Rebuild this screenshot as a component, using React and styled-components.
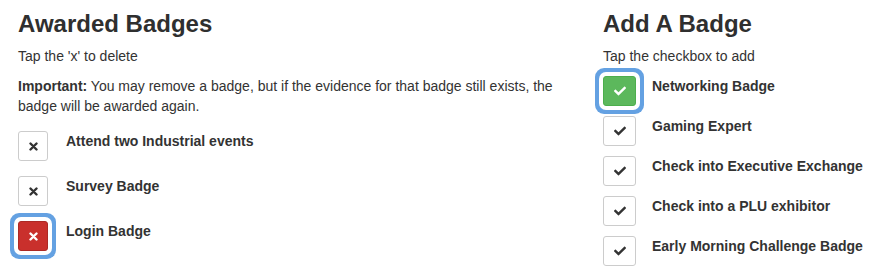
import React from 'react';
import styled, { createGlobalStyle, css } from 'styled-components';
import { FaCheck } from 'react-icons/fa';

const GlobalStyle = createGlobalStyle`
  body {
    margin: 0;
    background: #fff;
    color: #333;
    font-family: "Liberation Sans", Arial, sans-serif;
    font-size: 14px;
    line-height: 20px;
  }
`

const Page = styled.div`
  display: grid;
  grid-template-columns: 555px 1fr;
  column-gap: 30px;
  padding: 11px 0 0 18px;
`
const Column = styled.section`
  display: flex;
  flex-direction: column;
`
const Title = styled.h3`
  font-size: 24px;
  font-weight: bold;
  line-height: 26.4px;
  margin: 0 0 9px;
  color: #2f2f2f;
`
const Text = styled.p`
  margin: 0 0 10px;
`
const List = styled.ul`
  list-style: none;
  margin: ${p => p.$top}px 0 0;
  padding: 0;
  display: flex;
  flex-direction: column;
  gap: ${p => p.$gap}px;
`
const Row = styled.li`
  display: flex;
  align-items: flex-start;
  gap: ${p => p.$gap}px;
`
const Label = styled.span`
  font-weight: bold;
`

const variants = {
  plain: css`
    background: #fff;
    border-color: #ccc;
    color: #333;
  `,
  danger: css`
    background: #c9302c;
    border-color: #ac2925;
    color: #fff;
  `,
  success: css`
    background: #5cb85c;
    border-color: #4cae4c;
    color: #fff;
  `,
}

const Box = styled.button`
  flex: none;
  width: ${p => p.$w}px;
  height: 30px;
  padding: 0;
  border: 1px solid;
  border-radius: 3px;
  display: flex;
  align-items: center;
  justify-content: center;
  cursor: pointer;
  ${p => variants[p.$variant]}
  ${p => p.$focus && css`
    box-shadow: 0 0 0 4px #fff, 0 0 0 8px #64a1e2;
  `}
  svg {
    display: block;
  }
`

// thick "x" like the old font-awesome times glyph
const TimesIcon = () => (
  <svg width="9" height="9" viewBox="0 0 9 9">
    <path d="M1.5 1.5 L7.5 7.5 M7.5 1.5 L1.5 7.5" stroke="currentColor" strokeWidth="2.4" strokeLinecap="round" />
  </svg>
)

const awarded = [
  { name: 'Attend two Industrial events' },
  { name: 'Survey Badge' },
  { name: 'Login Badge', active: true },
]

const available = [
  { name: 'Networking Badge', active: true },
  { name: 'Gaming Expert' },
  { name: 'Check into Executive Exchange' },
  { name: 'Check into a PLU exhibitor' },
  { name: 'Early Morning Challenge Badge' },
]

const App = () => {
  return (
    <>
      <GlobalStyle />
      <Page>
        <Column>
          <Title>Awarded Badges</Title>
          <Text>Tap the 'x' to delete</Text>
          <Text>
            <b>Important:</b> You may remove a badge, but if the evidence for that badge still exists, the badge will be awarded again.
          </Text>
          <List $top={5} $gap={15}>
            {awarded.map(b => (
              <Row key={b.name} $gap={18}>
                <Box $w={30} $variant={b.active ? 'danger' : 'plain'} $focus={b.active}>
                  <TimesIcon />
                </Box>
                <Label>{b.name}</Label>
              </Row>
            ))}
          </List>
        </Column>
        <Column>
          <Title>Add A Badge</Title>
          <Text>Tap the checkbox to add</Text>
          <List $top={0} $gap={10}>
            {available.map(b => (
              <Row key={b.name} $gap={16}>
                <Box $w={33} $variant={b.active ? 'success' : 'plain'} $focus={b.active}>
                  <FaCheck size={12} />
                </Box>
                <Label>{b.name}</Label>
              </Row>
            ))}
          </List>
        </Column>
      </Page>
    </>
  )
}

export default App
